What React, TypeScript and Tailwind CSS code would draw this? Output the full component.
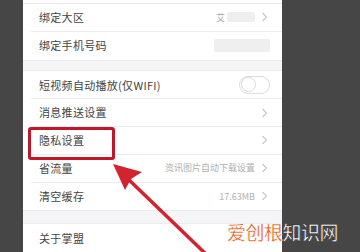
import React from "react";

const font = { fontFamily: '"Noto Sans CJK SC", "Noto Sans", sans-serif' };

function Chevron() {
  return (
    <svg width="7" height="10" viewBox="0 0 7 10" className="shrink-0">
      <path d="M1.5 1 L5.5 5 L1.5 9" fill="none" stroke="#c8c8c8" strokeWidth="1.2" />
    </svg>
  );
}

function Row({ label, right, last }: { label: string; right?: React.ReactNode; last?: boolean }) {
  return (
    <div className="h-[28px] pl-[8px]">
      <div className={`h-full flex items-center pl-[8px] pr-[14px] ${last ? "" : "border-b border-[#ececec]"}`}>
        <span className="text-[11px] text-[#444] tracking-[0.3px]">{label}</span>
        <div className="ml-auto flex items-center gap-[6px]">{right}</div>
      </div>
    </div>
  );
}

export default function App() {
  return (
    <div className="relative w-[360px] h-[252px] overflow-hidden bg-[#464646] flex" style={font}>
      <div className="w-[23px] shrink-0" />
      <div className="w-[259px] shrink-0 bg-white flex flex-col">
        <div className="h-[4px] border-b border-[#ececec]" />
        <Row
          label="绑定大区"
          right={
            <>
              <span className="text-[9px] text-[#aaa] -mr-[4px]">艾</span>
              <div className="w-[28px] h-[10px] bg-[#eeeeee] rounded-[2px]" />
              <Chevron />
            </>
          }
        />
        <Row
          label="绑定手机号码"
          last
          right={<div className="w-[56px] h-[13px] bg-[#efefef] rounded-[2px] -mr-[2px]" />}
        />
        <div className="h-[12px] bg-[#f5f5f7] border-y border-[#ececec]" />
        <Row
          label="短视频自动播放(仅WIFI)"
          right={
            <div className="w-[31px] h-[18px] rounded-full border border-[#dcdcdc] bg-white flex items-center px-[1px] -mr-[2px]">
              <div className="w-[15px] h-[15px] rounded-full bg-white border border-[#d8d8d8]" />
            </div>
          }
        />
        <Row label="消息推送设置" right={<Chevron />} />
        <Row label="隐私设置" right={<Chevron />} />
        <Row
          label="省流量"
          right={
            <>
              <span className="text-[9px] text-[#b0b0b0]">资讯图片自动下载设置</span>
              <Chevron />
            </>
          }
        />
        <Row
          label="清空缓存"
          last
          right={
            <>
              <span className="text-[9px] text-[#b0b0b0]">17.63MB</span>
              <Chevron />
            </>
          }
        />
        <div className="h-[14px] bg-[#f5f5f7] border-y border-[#ececec]" />
        <Row label="关于掌盟" last />
      </div>
      <div className="flex-1" />

      <div className="absolute left-[28px] top-[127px] w-[87px] h-[33px] border-[3px] border-[#c3162b] rounded-[3px]" />

      <svg className="absolute left-0 top-0" width="360" height="252" viewBox="0 0 360 252">
        <line x1="126" y1="177" x2="210" y2="258" stroke="#d2232f" strokeWidth="3.5" />
        <polygon points="113,164 142,172 131,179 125,190" fill="#d2232f" />
      </svg>

      <div className="absolute left-[227px] top-[220px] text-[19px] leading-[24px] font-medium tracking-[-0.5px]">
        <span className="text-[#e5621c]" style={{ WebkitTextStroke: "0.5px #ffffff" }}>爱创根</span>
        <span className="text-white" style={{ WebkitTextStroke: "0.6px #333" }}>知识网</span>
      </div>
    </div>
  );
}
